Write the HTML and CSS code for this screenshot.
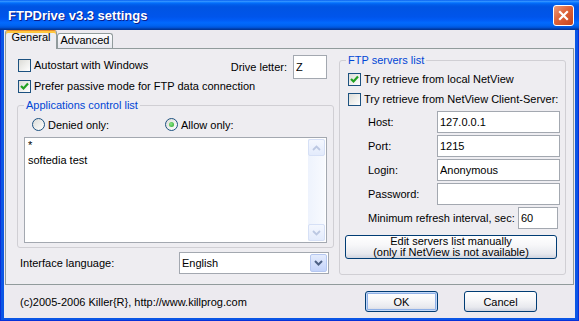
FILE: index.html
```html
<!DOCTYPE html>
<html lang="en">
<head>
    <meta charset="UTF-8">
    <title>FTPDrive v3.3 settings</title>
    <link rel="stylesheet" href="styles.css">
</head>
<body>

    <div class="window">
        <div class="titlebar">
            <span class="title">FTPDrive v3.3 settings</span>
            <button class="close-btn">
                <svg width="13" height="13" viewBox="0 0 13 13"><path d="M3 3 L10 10 M10 3 L3 10" stroke="#fff" stroke-width="2.2" stroke-linecap="square"/></svg>
            </button>
        </div>

        <div class="client">
            <!-- pestañas -->
            <div class="tabs">
                <div class="tab tab-active">General</div>
                <div class="tab tab-idle">Advanced</div>
            </div>

            <div class="panel">
                <div class="left-col">
                    <div class="row-top">
                        <label class="check"><span class="box"></span>Autostart with Windows</label>
                        <span class="drive-label">Drive letter:</span>
                        <input class="edit drive" value="Z">
                    </div>
                    <label class="check check-passive">
                        <span class="box"><svg width="11" height="11" viewBox="0 0 11 11"><polyline points="2,5 4.5,7.5 9,2.5" fill="none" stroke="#21A121" stroke-width="2.2"/></svg></span>
                        Prefer passive mode for FTP data connection
                    </label>

                    <fieldset class="group apps">
                        <legend>Applications control list</legend>
                        <div class="radios">
                            <label class="radio-label first"><span class="radio"></span>Denied only:</label>
                            <label class="radio-label"><span class="radio on"></span>Allow only:</label>
                        </div>
                        <div class="listbox">
                            <div class="items">
                                <div>*</div>
                                <div>softedia test</div>
                            </div>
                            <div class="vscroll">
                                <div class="sb-btn"><svg width="9" height="6" viewBox="0 0 9 6"><polyline points="1,5 4.5,1.5 8,5" fill="none" stroke="#BCC8E2" stroke-width="1.8"/></svg></div>
                                <div class="sb-track"></div>
                                <div class="sb-btn"><svg width="9" height="6" viewBox="0 0 9 6"><polyline points="1,1 4.5,4.5 8,1" fill="none" stroke="#BCC8E2" stroke-width="1.8"/></svg></div>
                            </div>
                        </div>
                    </fieldset>

                    <div class="lang-row">
                        <span>Interface language:</span>
                        <div class="combo">
                            <span class="combo-text">English</span>
                            <span class="drop"><svg width="9" height="6" viewBox="0 0 9 6"><polyline points="1,1 4.5,4.5 8,1" fill="none" stroke="#4D6185" stroke-width="2"/></svg></span>
                        </div>
                    </div>
                </div>

                <fieldset class="group servers">
                    <legend>FTP servers list</legend>
                    <label class="check check-srv">
                        <span class="box"><svg width="11" height="11" viewBox="0 0 11 11"><polyline points="2,5 4.5,7.5 9,2.5" fill="none" stroke="#21A121" stroke-width="2.2"/></svg></span>
                        Try retrieve from local NetView
                    </label>
                    <label class="check check-srv second"><span class="box"></span>Try retrieve from NetView Client-Server:</label>

                    <div class="field-row first-field"><span>Host:</span><input class="edit wide" value="127.0.0.1"></div>
                    <div class="field-row"><span>Port:</span><input class="edit wide" value="1215"></div>
                    <div class="field-row"><span>Login:</span><input class="edit wide" value="Anonymous"></div>
                    <div class="field-row"><span>Password:</span><input class="edit wide" value=""></div>
                    <div class="field-row"><span>Minimum refresh interval, sec:</span><input class="edit small" value="60"></div>

                    <button class="btn btn-edit">Edit servers list manually<br>(only if NetView is not available)</button>
                </fieldset>
            </div>

            <div class="footer">
                <span class="copyright">(c)2005-2006 Killer{R}, http://www.killprog.com</span>
                <button class="btn btn-default">OK</button>
                <button class="btn btn-cancel">Cancel</button>
            </div>
        </div>
    </div>

</body>
</html>
```

FILE: styles.css
```css
* {
    box-sizing: border-box;
}
body {
    margin: 0;
    font-family: "Liberation Sans", Arial, sans-serif;
    font-size: 11px;
    color: #000;
    background-color: #0B56E5;
}
.window {
    width: 579px;
    height: 321px;
    display: flex;
    flex-direction: column;
    background-color: #0B56E5;
    box-shadow: inset 1px 0 #0831D9, inset -1px 0 #0831D9, inset 0 -1px #0831D9;
}
.titlebar {
    height: 30px;
    flex: none;
    display: flex;
    align-items: center;
    padding: 0 5px 0 8px;
    background: linear-gradient(to bottom, #0058EE 0%, #3593FF 4%, #288EFF 6%, #127DFF 8%, #036FFC 10%, #0262EE 14%, #0057E5 20%, #0054E3 24%, #0055EB 56%, #005BF5 66%, #026AFE 76%, #0062EF 86%, #0052D6 92%, #0040AB 96%, #003092 100%);
}
.title {
    flex: 1;
    color: #fff;
    font-weight: bold;
    font-size: 13px;
    text-shadow: 1px 1px #0A1E8C;
}
.close-btn {
    width: 21px;
    height: 21px;
    padding: 0;
    border: 1px solid #fff;
    border-radius: 3px;
    background: linear-gradient(135deg, #EB9A7C 0%, #DE6339 45%, #C4441C 100%);
    display: flex;
    align-items: center;
    justify-content: center;
}
.client {
    flex: 1;
    margin: 0 4px 3px;
    background-color: #ECEAEF;
    display: flex;
    flex-direction: column;
}

/* pestañas */
.tabs {
    height: 18px;
    flex: none;
    display: flex;
    align-items: flex-end;
    padding-left: 1px;
}
.tab {
    border: 1px solid #919B9C;
    border-bottom: none;
    border-radius: 3px 3px 0 0;
    text-align: center;
    line-height: 13px;
}
.tab-active {
    position: relative;
    z-index: 1;
    width: 52px;
    height: 19px;
    margin-bottom: -1px;
    background-color: #EEEDF1;
    border-top: 1px solid #E68B2C;
    box-shadow: inset 0 2px #FFC73C;
}
.tab-idle {
    width: 56px;
    height: 15px;
    background: linear-gradient(#FCFCFE, #E6E7EE);
}
.panel {
    height: 237px;
    flex: none;
    margin: 0 1px;
    border: 1px solid #919B9C;
    background-color: #EEEDF1;
    display: flex;
    align-items: flex-start;
    padding: 6px 7px 0 11px;
}
.left-col {
    width: 317px;
    display: flex;
    flex-direction: column;
}
.row-top {
    display: flex;
    align-items: center;
    height: 24px;
}
.row-top .check {
    align-self: flex-start;
    margin-top: 4px;
    margin-left: 1px;
}
.drive-label {
    margin-left: auto;
    margin-right: 6px;
}

/* controles */
.check {
    display: flex;
    align-items: center;
    gap: 3px;
    height: 13px;
    line-height: 13px;
    white-space: nowrap;
}
.check-passive {
    margin-top: 1px;
    margin-left: 1px;
}
.box {
    width: 13px;
    height: 13px;
    flex: none;
    border: 1px solid #1C5180;
    background: linear-gradient(135deg, #DCDCD7 0%, #FFFFFF 100%);
    display: flex;
    align-items: center;
    justify-content: center;
}
.edit {
    height: 22px;
    border: 1px solid #A3A8B0;
    background-color: #fff;
    font: inherit;
    color: #000;
    padding: 0 2px;
    margin: 0;
    outline: none;
}
.drive {
    width: 34px;
    height: 24px;
    margin-right: 7px;
}
.group {
    margin: 6px 0 0;
    padding: 6px 5px 4px 6px;
    border: 1px solid #D0CFD4;
    border-radius: 3px;
    min-width: 0;
}
.group legend {
    padding: 0 2px;
    color: #0046D5;
    line-height: 13px;
}
.radios {
    display: flex;
    height: 13px;
    padding-left: 8px;
}
.radio-label {
    display: flex;
    align-items: center;
    gap: 3px;
}
.radio-label.first {
    width: 133px;
}
.radio {
    width: 13px;
    height: 13px;
    border-radius: 50%;
    border: 1px solid #1C5180;
    background: linear-gradient(135deg, #DCDCD7 0%, #FFFFFF 100%);
    display: flex;
    align-items: center;
    justify-content: center;
}
.radio.on::after {
    content: "";
    width: 5px;
    height: 5px;
    border-radius: 50%;
    background: radial-gradient(circle at 40% 40%, #8DE88A, #21A121);
}
.listbox {
    margin-top: 6px;
    width: 303px;
    height: 106px;
    border: 1px solid #A3A8B0;
    background-color: #fff;
    display: flex;
}
.items {
    flex: 1;
    padding-left: 3px;
    line-height: 15px;
}
.vscroll {
    width: 17px;
    margin: 1px 1px 1px 0;
    display: flex;
    flex-direction: column;
    background: linear-gradient(90deg, #EEF3FD, #F8FAFE);
}
.sb-btn {
    height: 17px;
    border: 1px solid #D6E0F6;
    border-radius: 2px;
    background: linear-gradient(#F4F7FE, #E3EBFC);
    display: flex;
    align-items: center;
    justify-content: center;
}
.sb-track {
    flex: 1;
}
.lang-row {
    display: flex;
    align-items: center;
    height: 22px;
    margin-top: 4px;
    padding-left: 3px;
}
.combo {
    margin-left: auto;
    margin-right: 5px;
    width: 150px;
    height: 22px;
    border: 1px solid #A3A8B0;
    background-color: #fff;
    display: flex;
}
.combo-text {
    flex: 1;
    padding-left: 2px;
    line-height: 20px;
}
.drop {
    width: 17px;
    margin: 1px;
    border: 1px solid #B5C7F0;
    border-radius: 2px;
    background: linear-gradient(#E4ECFD, #C4D4FA);
    display: flex;
    align-items: center;
    justify-content: center;
}

/* grupo de servidores */
.servers {
    width: 227px;
    margin: -1px 0 0 5px;
    padding: 6px 5px 15px 6px;
}
.check-srv {
    margin-left: 2px;
}
.check-srv.second {
    margin-top: 7px;
}
.field-row {
    display: flex;
    align-items: center;
    height: 22px;
    margin-top: 2px;
    padding-left: 22px;
}
.field-row.first-field {
    margin-top: 5px;
}
.wide {
    width: 123px;
    margin-left: auto;
}
.small {
    width: 40px;
    margin-left: auto;
    margin-right: 2px;
}

/* botones */
.btn {
    font: inherit;
    color: #000;
    padding: 0;
    height: 21px;
    border: 1px solid #003C74;
    border-radius: 3px;
    background: linear-gradient(180deg, #FFFFFF 0%, #F7F7F9 40%, #E8E9EE 80%, #D0D4DF 100%);
}
.btn-edit {
    display: block;
    width: 212px;
    height: 24px;
    margin: 6px 0 0 -1px;
    line-height: 11px;
}
.footer {
    flex: 1;
    display: flex;
    align-items: center;
    padding: 0 38px 0 16px;
}
.copyright {
    flex: 1;
}
.footer .btn {
    width: 73px;
}
.btn-default {
    box-shadow: inset 0 0 0 1px #C3D8F8, inset 0 0 0 2px #8FB0E6;
}
.btn-cancel {
    margin-left: 26px;
}
```
